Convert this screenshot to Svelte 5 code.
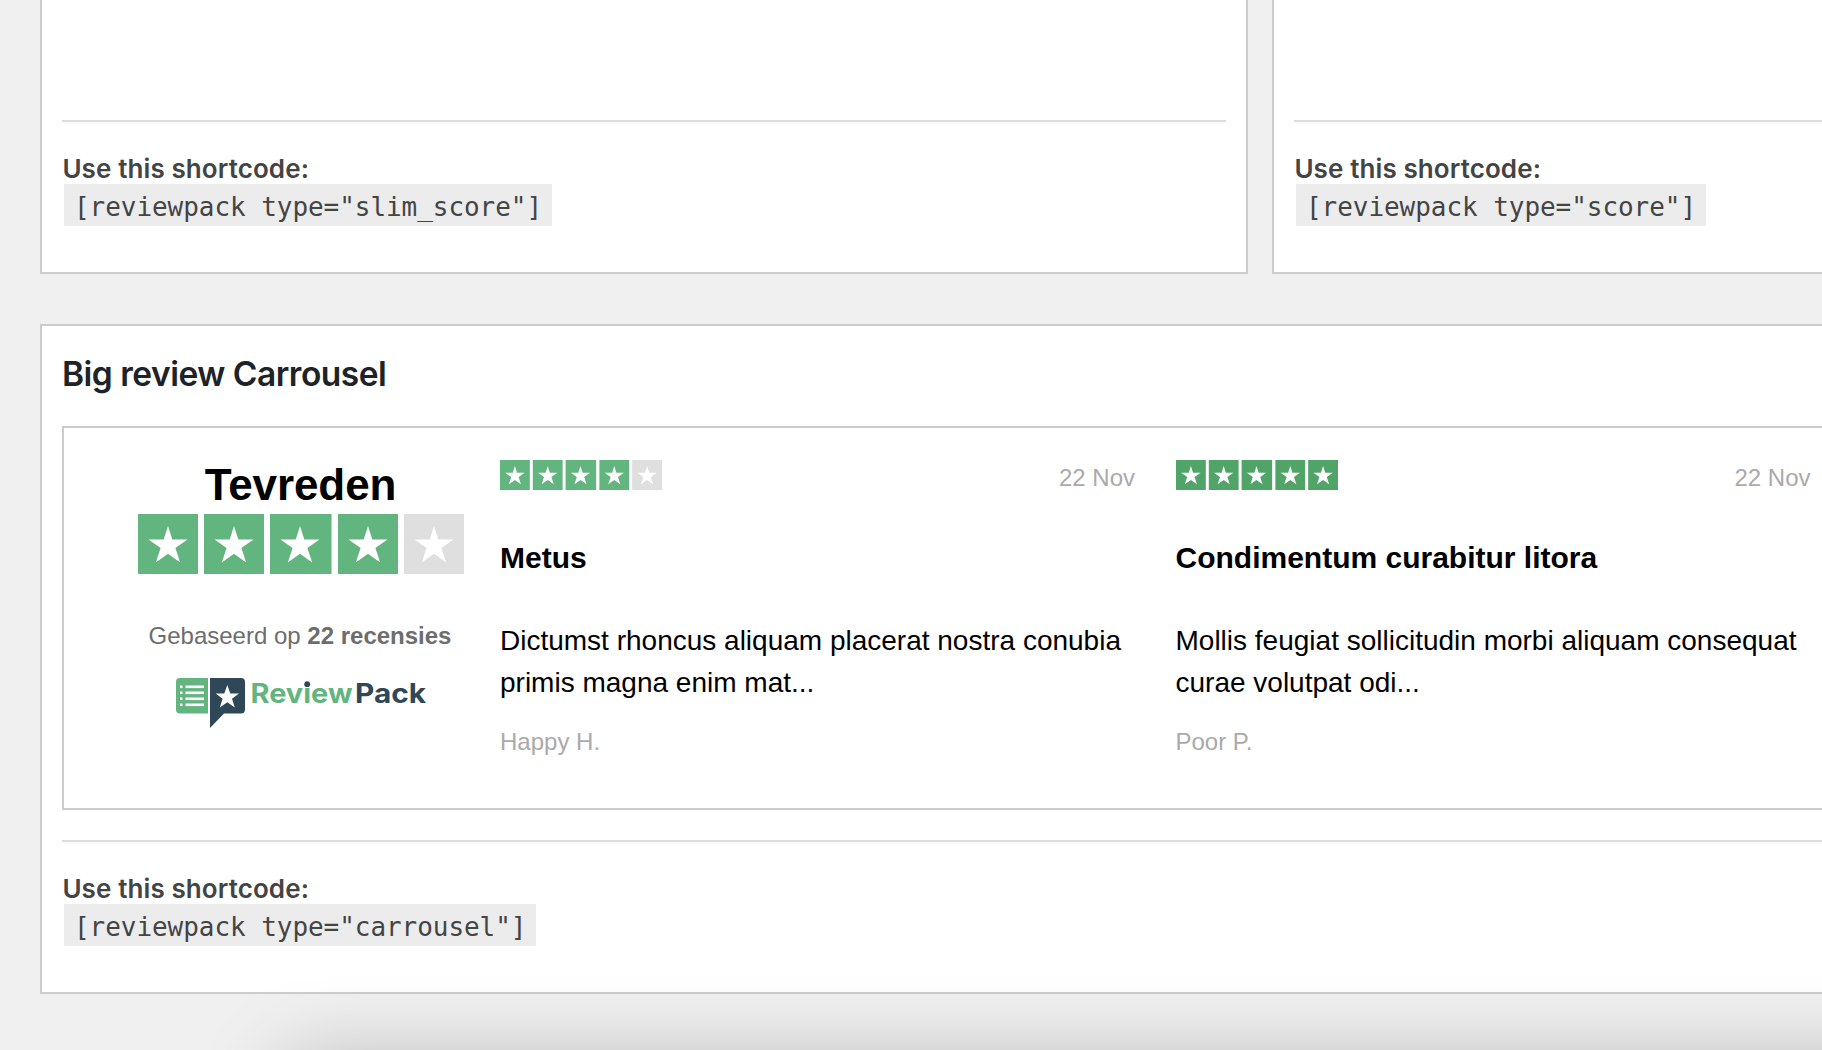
<script>
  const reviews = [
    { stars: 4, date: '22 Nov', title: 'Metus', lines: ['Dictumst rhoncus aliquam placerat nostra conubia', 'primis magna enim mat...'], author: 'Happy H.' },
    { stars: 5, date: '22 Nov', title: 'Condimentum curabitur litora', lines: ['Mollis feugiat sollicitudin morbi aliquam consequat', 'curae volutpat odi...'], author: 'Poor P.' }
  ];
  const tiles = [0, 66, 132, 200, 266];
  const starPath = 'M30 12 L34.3 25.5 H49.5 L37.4 34 L42.2 48.5 L30 39.8 L17.8 48.5 L22.6 34 L10.5 25.5 H25.7 Z';
</script>

{#snippet rating(count, cls)}
  <svg class={cls} viewBox="0 0 326 60" preserveAspectRatio="none" role="img" aria-label="{count} / 5">
    {#each tiles as x, i}
      <g transform="translate({x} 0)">
        <rect width={i === 2 ? 61.5 : 60} height="60" fill={i >= count ? '#dfdfdf' : count === 5 ? '#50a468' : '#62b57f'} />
        <path d={starPath} fill="#fff" />
      </g>
    {/each}
  </svg>
{/snippet}

{#snippet shortcode(code)}
  <hr />
  <div class="label"><span>Use this shortcode:</span></div>
  <code>{code}</code>
{/snippet}

<div class="page">
  <div class="row">
    <section class="card slim">{@render shortcode('[reviewpack type="slim_score"]')}</section>
    <section class="card slim">{@render shortcode('[reviewpack type="score"]')}</section>
  </div>
  <section class="card big">
    <h2>Big review Carrousel</h2>
    <div class="widget">
      <div class="summary">
        <div class="verdict">Tevreden</div>
        {@render rating(4, 'large')}
        <div class="based">Gebaseerd op <b>22 recensies</b></div>
        <svg class="logo" viewBox="0 0 252 52" role="img" aria-label="ReviewPack">
          <path d="M4 0H32V35.5H4Q0 35.5 0 31.5V4Q0 0 4 0Z" fill="#62b57f" />
          <g fill="#fff">
            {#each [7.5, 13.5, 19.5, 25.5] as y}
              <rect x="4" {y} width="2.5" height="2.6" />
              <rect x="9.5" {y} width="18.5" height="2.6" />
            {/each}
          </g>
          <path d="M34 0H65Q69 0 69 4V31.500Q69 35.500 65 35.500H48L34 50Z" fill="#2f4858" />
          <path d="M51.300 7 L54.300 15.500 H63 L56 20.700 L58.800 29.500 L51.300 24.300 L43.800 29.500 L46.600 20.700 L39.600 15.500 H48.300Z" fill="#fff" />
          <text x="74.500" y="25" textLength="102" lengthAdjust="spacingAndGlyphs" fill="#62b57f">Review</text>
          <circle cx="131.200" cy="6.200" r="2.900" fill="#2f4858" />
          <text x="179" y="25" textLength="71" lengthAdjust="spacingAndGlyphs" fill="#2f4858">Pack</text>
        </svg>
      </div>
      {#each reviews as r}
        <article>
          <header>{@render rating(r.stars, 'small')}<time>{r.date}</time></header>
          <h3>{r.title}</h3>
          <p>{#each r.lines as line}<span>{line}</span>{/each}</p>
          <footer>{r.author}</footer>
        </article>
      {/each}
    </div>
    {@render shortcode('[reviewpack type="carrousel"]')}
  </section>
  <div class="shade"></div>
</div>

<style>
  :global(body) { background: #f0f0f1; overflow: hidden; }
  .page { position: relative; box-sizing: border-box; width: 1822px; height: 1050px; padding-left: 40px; overflow: hidden; background: #f0f0f1; color: #444; font-family: Inter, sans-serif; }
  .row { display: grid; grid-template-columns: 1208px 1208px; gap: 24px; margin-bottom: 50px; }
  .card { box-sizing: border-box; background: #fff; border: 2px solid #ccc; padding: 0 20px; }
  .slim { height: 274px; border-top: 0; padding-top: 120px; }
  .big { width: 2440px; height: 670px; }
  hr { margin: 0; border: 0; border-top: 2px solid #ddd; border-bottom: 2px solid #fafafa; }
  .label { height: 39px; margin-top: 21px; padding-left: 0.4px; font-size: 26px; font-weight: 600; line-height: 48px; letter-spacing: 0.1px; white-space: nowrap; }
  code { display: block; box-sizing: border-box; width: max-content; height: 42px; margin-left: 2px; padding: 0 10px; background: #ececec; font: 26px/47px "DejaVu Sans Mono", monospace; letter-spacing: -0.053px; white-space: pre; }
  h2 { margin: 26px 0 0; height: 74px; color: #1d2327; font-size: 33.5px; font-weight: 600; line-height: 44px; letter-spacing: -0.5px; white-space: nowrap; }
  .widget { box-sizing: border-box; display: flex; width: 2396px; height: 384px; margin-bottom: 30px; border: 2px solid #ccc; color: #000; font-family: "Liberation Sans", Arial, sans-serif; }
  .summary { display: flex; flex-direction: column; align-items: center; width: 436px; padding-top: 32px; padding-left: 38px; box-sizing: border-box; flex: none; }
  .verdict { height: 54px; padding-right: 1px; font-size: 44px; font-weight: 700; line-height: 50px; letter-spacing: -0.1px; }
  .large { display: block; width: 326px; height: 60px; flex: none; }
  .based { margin-top: 45px; height: 59px; padding-right: 2px; font-size: 24px; line-height: 34px; color: #6d6d6d; white-space: nowrap; }
  .logo { display: block; width: 252px; height: 52px; margin-left: 2px; flex: none; }
  .logo text { font: 700 27px Inter, sans-serif; }
  article { flex: none; width: 635px; margin-right: 40.5px; padding-top: 32px; }
  header { display: flex; justify-content: space-between; height: 68px; }
  .small { display: block; width: 162px; height: 30px; }
  time { font-size: 24px; line-height: 36px; color: #aaa; }
  h3 { margin: 0; height: 78px; font-size: 30px; font-weight: 700; line-height: 60px; }
  p { margin: 0; padding-top: 14px; font-size: 28px; line-height: 42px; }
  p span { display: block; white-space: nowrap; }
  footer { margin-top: 20px; font-size: 24px; line-height: 36px; color: #aaa; }
  .shade { position: absolute; left: 287px; top: 1067px; width: 1920px; height: 400px; box-shadow: 0 0 82px rgba(0, 0, 0, 0.28); }
</style>
